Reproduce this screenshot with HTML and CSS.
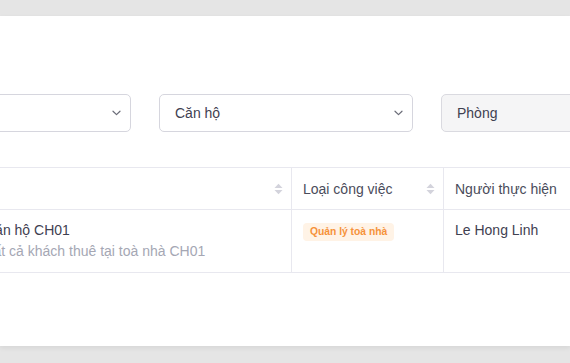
FILE: index.html
```html
<!DOCTYPE html>
<html lang="vi">
<head>
<meta charset="utf-8">
<link rel="stylesheet" href="styles.css">
</head>
<body>
<div class="card">
  <div class="viewport">
    <div class="filters">
      <div class="select">
        <span class="select-text"></span>
        <svg class="chev" width="9" height="6" viewBox="0 0 9 6"><path d="M1 1.2 L4.5 4.6 L8 1.2" fill="none" stroke="#6b6d78" stroke-width="1.2" stroke-linecap="round" stroke-linejoin="round"/></svg>
      </div>
      <div class="select">
        <span class="select-text">Căn hộ</span>
        <svg class="chev" width="9" height="6" viewBox="0 0 9 6"><path d="M1 1.2 L4.5 4.6 L8 1.2" fill="none" stroke="#6b6d78" stroke-width="1.2" stroke-linecap="round" stroke-linejoin="round"/></svg>
      </div>
      <div class="select select-disabled">
        <span class="select-text">Phòng</span>
      </div>
    </div>
    <table class="grid">
      <colgroup>
        <col class="c1"><col class="c2"><col class="c3">
      </colgroup>
      <thead>
        <tr>
          <th><div class="th-inner"><span></span><svg class="sort" width="9" height="12" viewBox="0 0 9 12"><polygon points="0.5,5 4.5,0.8 8.5,5" fill="#d3d3dc"/><polygon points="0.5,7 8.5,7 4.5,11.2" fill="#d3d3dc"/></svg></div></th>
          <th><div class="th-inner"><span>Loại công việc</span><svg class="sort" width="9" height="12" viewBox="0 0 9 12"><polygon points="0.5,5 4.5,0.8 8.5,5" fill="#d3d3dc"/><polygon points="0.5,7 8.5,7 4.5,11.2" fill="#d3d3dc"/></svg></div></th>
          <th><div class="th-inner"><span>Người thực hiện</span></div></th>
        </tr>
      </thead>
      <tbody>
        <tr>
          <td>
            <div class="title">Căn hộ CH01</div>
            <div class="sub">Tất cả khách thuê tại toà nhà CH01</div>
          </td>
          <td><span class="tag">Quản lý toà nhà</span></td>
          <td><div class="title">Le Hong Linh</div></td>
        </tr>
      </tbody>
    </table>
  </div>
</div>
</body>
</html>
```
FILE: styles.css
```css
* { box-sizing: border-box; }
html, body { margin: 0; padding: 0; }
body {
  background: #e5e5e5;
  font-family: "Liberation Sans", Arial, sans-serif;
  font-size: 14px;
  color: #3f4151;
  overflow: hidden;
  height: 363px;
  padding-top: 16px;
}
.card {
  background: #ffffff;
  height: 330px;
  box-shadow: 0 2px 5px rgba(0, 0, 0, 0.07);
}
.viewport {
  overflow: hidden;
  height: 100%;
  padding-top: 78px;
}
.filters {
  display: flex;
  gap: 28.5px;
  margin-left: -123px;
  width: 900px;
}
.select {
  width: 253.5px;
  height: 38px;
  flex: none;
  border: 1px solid #d6d6de;
  border-radius: 5px;
  display: flex;
  align-items: center;
  justify-content: space-between;
  padding: 0 9px 0 15px;
  background: #fff;
}
.select-text { color: #3f4151; }
.select-disabled { background: #f5f5f6; border-color: #dadae0; }
.chev { display: block; }
.grid {
  margin-top: 35px;
  margin-left: -27px;
  border-collapse: collapse;
  table-layout: fixed;
  width: 700px;
}
.c1 { width: 318px; }
.c2 { width: 152px; }
.c3 { width: 230px; }
.grid th, .grid td {
  border: 1px solid #e8e8ef;
  text-align: left;
  vertical-align: top;
}
.grid th {
  height: 42px;
  font-weight: normal;
  color: #4a4c5b;
  padding: 0 8px 0 11px;
  vertical-align: middle;
}
.th-inner {
  display: flex;
  align-items: center;
  justify-content: space-between;
}
.sort { display: block; flex: none; }
.grid td {
  padding: 10px 12px 9px 11px;
  line-height: 21px;
  height: 63px;
}
.title { color: #3f4151; }
.sub { color: #a5a7b4; }
.tag {
  display: inline-block;
  margin-top: 3px;
  background: #fff3e6;
  color: #f6923a;
  font-weight: bold;
  font-size: 10.3px;
  line-height: 18px;
  height: 18px;
  padding: 0 7px;
  border-radius: 4px;
  vertical-align: top;
}
```
